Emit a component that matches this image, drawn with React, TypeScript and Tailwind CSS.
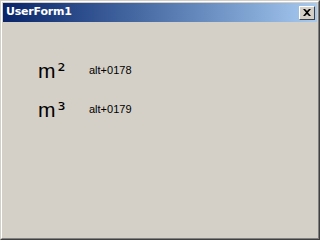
export default function App() {
  const rows = [
    { base: "m", sup: "²", code: "alt+0178" },
    { base: "m", sup: "³", code: "alt+0179" },
  ];
  return (
    <div className="w-[320px] h-[240px] bg-[#d4d0c8] border border-t-[#d4d0c8] border-l-[#d4d0c8] border-r-[#404040] border-b-[#404040]">
      <div className="h-full border border-t-white border-l-white border-r-[#808080] border-b-[#808080] px-px pt-px flex flex-col">
        <div className="h-[19px] flex items-center justify-between pl-[3px] pr-[2px] bg-gradient-to-r from-[#0a246a] to-[#a6caf0]">
          <span className="text-white font-bold text-[11px] font-['Tahoma','DejaVu_Sans',sans-serif] tracking-[-0.2px]">
            UserForm1
          </span>
          <div className="w-[16px] h-[14px] bg-[#d4d0c8] border border-t-white border-l-white border-r-[#404040] border-b-[#404040] flex items-center justify-center">
            <svg width="8" height="7" viewBox="0 0 8 7">
              <path d="M0 0h2l2 2 2-2h2L5 3.5 8 7H6L4 5 2 7H0l3-3.5z" fill="#000" />
            </svg>
          </div>
        </div>
        <div className="flex-1 flex flex-col gap-[14px] pl-[35px] pt-[36px]">
          {rows.map((r) => (
            <div key={r.code} className="flex items-center h-[25px]">
              <span className="w-[51px] text-[21px] text-black font-['Liberation_Sans',sans-serif] leading-none">
                {r.base}
                <span className="ml-[2px] font-['DejaVu_Sans',sans-serif] text-[20px]">{r.sup}</span>
              </span>
              <span className="text-[11px] text-black font-['Liberation_Sans',sans-serif] leading-none">
                {r.code}
              </span>
            </div>
          ))}
        </div>
      </div>
    </div>
  );
}
